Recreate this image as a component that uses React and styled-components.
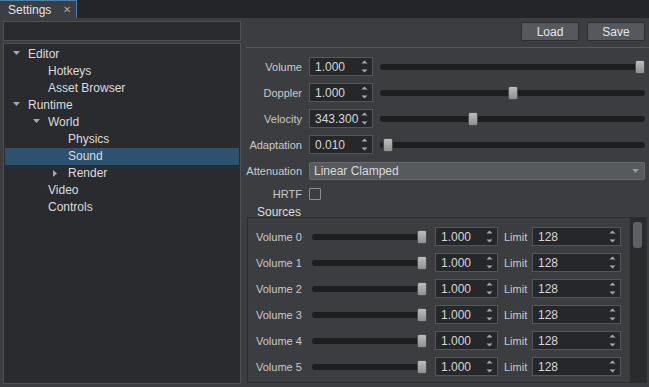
import React from "react";
import styled, { createGlobalStyle } from "styled-components";

const Global = createGlobalStyle`
  html, body { margin: 0; padding: 0; background: #3b3d41; }
  body { font-family: "Liberation Sans", Arial, sans-serif; font-size: 11px; }
  * { box-sizing: border-box; }
`;

const Window = styled.div`
  width: 649px;
  height: 387px;
  display: flex;
  flex-direction: column;
  background: #3b3d41;
  overflow: hidden;
  color: #d0d0d0;
`;

const TabBar = styled.div`
  height: 18px;
  flex: none;
  display: flex;
  align-items: flex-end;
  background: #242528;
`;

const Tab = styled.div`
  width: 77px;
  height: 18px;
  display: flex;
  align-items: center;
  justify-content: space-between;
  padding: 0 5px 0 8px;
  background: #3b3e43;
  border-top: 1px solid #4f7ea3;
  border-right: 1px solid #4f7ea3;
  color: #e4e4e4;
  font-size: 12px;
`;

const Close = styled.span`
  color: #a9a9a9;
  font-size: 10px;
`;

const Body = styled.div`
  flex: 1;
  display: flex;
  min-height: 0;
`;

const LeftPane = styled.div`
  width: 241px;
  flex: none;
  display: flex;
  flex-direction: column;
  gap: 2px;
  padding: 3px 0 3px 3px;
`;

const Search = styled.div`
  height: 20px;
  flex: none;
  background: #2a2b2e;
  border: 1px solid #4e5054;
`;

const Tree = styled.div`
  flex: 1;
  background: #2a2b2e;
  border: 1px solid #4e5054;
  padding: 1px 1px 0 1px;
  display: flex;
  flex-direction: column;
`;

const TreeRow = styled.div`
  height: 17.1px;
  display: flex;
  align-items: center;
  padding-left: ${(p) => 3 + p.$level * 20}px;
  background: ${(p) => (p.$selected ? "#2d5270" : "transparent")};
  color: #dcdcdc;
  font-size: 12px;
`;

const Arrow = styled.span`
  width: 20px;
  flex: none;
  display: flex;
  align-items: center;
  padding-left: 5px;
`;

const RightPane = styled.div`
  flex: 1;
  display: flex;
  flex-direction: column;
  min-width: 0;
`;

const ButtonBar = styled.div`
  display: flex;
  justify-content: flex-end;
  gap: 8px;
  padding: 4px 4px 0 0;
  height: 29px;
`;

const Button = styled.div`
  width: 58px;
  height: 19px;
  display: flex;
  align-items: center;
  justify-content: center;
  background: #55585d;
  border: 1px solid #2c2d30;
  border-radius: 2px;
  color: #e6e6e6;
  font-size: 12px;
`;

const Separator = styled.div`
  height: 1px;
  margin-left: 5px;
  background: #56585c;
  flex: none;
`;

const Form = styled.div`
  display: flex;
  flex-direction: column;
  gap: 7px;
  padding: 9px 4px 0 0;
`;

const Row = styled.div`
  display: flex;
  align-items: center;
  height: ${(p) => p.$h || 19}px;
  margin-top: ${(p) => p.$mt || 0}px;
`;

const Label = styled.div`
  width: 61px;
  flex: none;
  text-align: right;
  margin-right: 7px;
  color: #c9c9c9;
  white-space: nowrap;
`;

const SpinBox = styled.div`
  width: ${(p) => p.$w}px;
  height: 19px;
  flex: none;
  display: flex;
  align-items: center;
  justify-content: space-between;
  padding: 0 4px 0 5px;
  background: #26272a;
  border: 1px solid #54565a;
  color: #d6d6d6;
  font-size: 12px;
  overflow: hidden;
  white-space: nowrap;
`;

const SpinText = styled.span`
  overflow: hidden;
  flex: 1;
`;

const SliderTrack = styled.div`
  position: relative;
  flex: ${(p) => (p.$w ? "none" : 1)};
  width: ${(p) => (p.$w ? `${p.$w}px` : "auto")};
  height: 14px;
  margin-left: ${(p) => p.$ml}px;
  margin-right: ${(p) => p.$mr || 0}px;
  display: flex;
  align-items: center;
`;

const Groove = styled.div`
  width: 100%;
  height: 6px;
  border-radius: 3px;
  background: #1d1e20;
`;

const Handle = styled.div`
  position: absolute;
  top: 0;
  width: 10px;
  height: 14px;
  border-radius: 2px;
  border: 1px solid #4a4b4d;
  background: linear-gradient(#bdbdbd, #8f8f8f);
`;

const Combo = styled.div`
  flex: 1;
  height: 18px;
  display: flex;
  align-items: center;
  justify-content: space-between;
  padding: 0 5px 0 4px;
  background: #56595e;
  border: 1px solid #66686c;
  border-radius: 2px;
  color: #dadada;
  font-size: 12px;
`;

const Check = styled.div`
  width: 12px;
  height: 12px;
  border: 1px solid #8b8d91;
  border-radius: 1px;
`;

const GroupTitle = styled.div`
  height: 12px;
  line-height: 12px;
  margin: 6px 0 0 16px;
  color: #dcdcdc;
  font-size: 12px;
`;

const Group = styled.div`
  flex: 1;
  display: flex;
  margin: -1px 2px 4px 6px;
  border: 1px solid #2c2d30;
  border-right-width: 2px;
  min-height: 0;
  overflow: hidden;
`;

const GroupContent = styled.div`
  flex: 1;
  display: flex;
  flex-direction: column;
  gap: 7px;
  padding: 9px 0 0 8px;
`;

const SourceLabel = styled.div`
  width: 56px;
  flex: none;
  color: #c9c9c9;
  white-space: nowrap;
`;

const LimitLabel = styled.div`
  width: 28px;
  margin-left: 6px;
  flex: none;
  color: #c9c9c9;
`;

const ScrollTrack = styled.div`
  width: 15px;
  flex: none;
  margin-left: 9px;
  background: #2a2b2d;
  padding: 4px 3px;
`;

const Thumb = styled.div`
  height: 26px;
  border-radius: 3px;
  background: #5d6064;
`;

const TriDown = ({ color = "#a9a9a9" }) => (
  <svg width="7" height="5" viewBox="0 0 7 5">
    <path d="M0 0 H7 L3.5 4 Z" fill={color} />
  </svg>
);

const TriRight = () => (
  <svg width="5" height="7" viewBox="0 0 5 7">
    <path d="M0 0 V7 L4 3.5 Z" fill="#a9a9a9" />
  </svg>
);

const SpinArrows = () => (
  <svg width="7" height="15" viewBox="0 0 7 15" style={{ flex: "none" }}>
    <path d="M0.5 4.5 L3.5 1.5 L6.5 4.5 Z" fill="#a8a8a8" />
    <path d="M0.5 10.5 L3.5 13.5 L6.5 10.5 Z" fill="#a8a8a8" />
  </svg>
);

const Spin = ({ value, w }) => (
  <SpinBox $w={w}>
    <SpinText>{value}</SpinText>
    <SpinArrows />
  </SpinBox>
);

const Slider = ({ frac, w, ml, mr }) => (
  <SliderTrack $w={w} $ml={ml} $mr={mr}>
    <Groove />
    <Handle style={{ left: `calc(${frac} * (100% - 10px))` }} />
  </SliderTrack>
);

const tree = [
  { label: "Editor", level: 0, arrow: "down" },
  { label: "Hotkeys", level: 1 },
  { label: "Asset Browser", level: 1 },
  { label: "Runtime", level: 0, arrow: "down" },
  { label: "World", level: 1, arrow: "down" },
  { label: "Physics", level: 2 },
  { label: "Sound", level: 2, selected: true },
  { label: "Render", level: 2, arrow: "right" },
  { label: "Video", level: 1 },
  { label: "Controls", level: 1 },
];

const params = [
  { label: "Volume", value: "1.000", frac: 1 },
  { label: "Doppler", value: "1.000", frac: 0.5 },
  { label: "Velocity", value: "343.300", frac: 0.345 },
  { label: "Adaptation", value: "0.010", frac: 0.01 },
];

export default function App() {
  return (
    <Window>
      <Global />
      <TabBar>
        <Tab>
          <span>Settings</span>
          <Close>✕</Close>
        </Tab>
      </TabBar>
      <Body>
        <LeftPane>
          <Search />
          <Tree>
            {tree.map((t) => (
              <TreeRow key={t.label} $level={t.level} $selected={t.selected}>
                <Arrow>
                  {t.arrow === "down" && <TriDown />}
                  {t.arrow === "right" && <TriRight />}
                </Arrow>
                {t.label}
              </TreeRow>
            ))}
          </Tree>
        </LeftPane>
        <RightPane>
          <ButtonBar>
            <Button>Load</Button>
            <Button>Save</Button>
          </ButtonBar>
          <Separator />
          <Form>
            {params.map((p) => (
              <Row key={p.label}>
                <Label>{p.label}</Label>
                <Spin value={p.value} w={64} />
                <Slider frac={p.frac} ml={7} />
              </Row>
            ))}
            <Row $h={18} $mt={1}>
              <Label>Attenuation</Label>
              <Combo>
                <span>Linear Clamped</span>
                <TriDown color="#9a9a9a" />
              </Combo>
            </Row>
            <Row $h={12} $mt={1}>
              <Label>HRTF</Label>
              <Check />
            </Row>
          </Form>
          <GroupTitle>Sources</GroupTitle>
          <Group>
            <GroupContent>
              {[0, 1, 2, 3, 4, 5].map((i) => (
                <Row key={i}>
                  <SourceLabel>Volume {i}</SourceLabel>
                  <Slider frac={1} w={115} ml={0} mr={8} />
                  <Spin value="1.000" w={63} />
                  <LimitLabel>Limit</LimitLabel>
                  <Spin value="128" w={89} />
                </Row>
              ))}
            </GroupContent>
            <ScrollTrack>
              <Thumb />
            </ScrollTrack>
          </Group>
        </RightPane>
      </Body>
    </Window>
  );
}
